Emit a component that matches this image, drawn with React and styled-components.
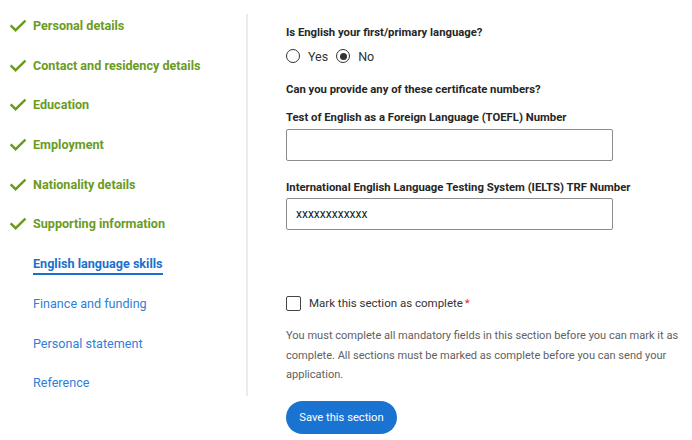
import React, { useState } from 'react'
import styled, { createGlobalStyle } from 'styled-components'

const GlobalStyle = createGlobalStyle`
  body {
    margin: 0;
    background: #fff;
    font-family: Roboto, "Liberation Sans", Arial, sans-serif;
  }
`;

const sections = [
    { name: 'Personal details', done: true },
    { name: 'Contact and residency details', done: true },
    { name: 'Education', done: true },
    { name: 'Employment', done: true },
    { name: 'Nationality details', done: true },
    { name: 'Supporting information', done: true },
    { name: 'English language skills', active: true },
    { name: 'Finance and funding' },
    { name: 'Personal statement' },
    { name: 'Reference' },
]

function Check() {
    return (
        <svg width="16" height="12" viewBox="0 0 16 12" fill="none">
            <path d="M1.5 6.2 L5.6 10.2 L14.6 1.4" stroke="#6b9b1f" strokeWidth="2.4" strokeLinecap="square" />
        </svg>
    )
}

function App() {
    const [first, setFirst] = useState('no')
    const [toefl, setToefl] = useState('')
    const [ielts, setIelts] = useState('xxxxxxxxxxxx')
    const [complete, setComplete] = useState(false)

    return (
        <Page>
            <GlobalStyle />
            <Nav>
                {sections.map(s => (
                    <NavItem key={s.name}>
                        <CheckSlot>{s.done && <Check />}</CheckSlot>
                        <NavLink done={s.done} active={s.active}>{s.name}</NavLink>
                    </NavItem>
                ))}
            </Nav>

            <Content>
                <Question>Is English your first/primary language?</Question>
                <RadioRow>
                    <RadioLabel onClick={() => setFirst('yes')}>
                        <RadioDot checked={first === 'yes'} />Yes
                    </RadioLabel>
                    <RadioLabel onClick={() => setFirst('no')}>
                        <RadioDot checked={first === 'no'} />No
                    </RadioLabel>
                </RadioRow>

                <Question $top={18}>Can you provide any of these certificate numbers?</Question>

                <FieldLabel $top={12}>Test of English as a Foreign Language (TOEFL) Number</FieldLabel>
                <TextInput value={toefl} onChange={e => setToefl(e.target.value)} />

                <FieldLabel $top={19}>International English Language Testing System (IELTS) TRF Number</FieldLabel>
                <TextInput value={ielts} onChange={e => setIelts(e.target.value)} />

                <CompleteRow onClick={() => setComplete(!complete)}>
                    <Box checked={complete} />
                    <span>Mark this section as complete</span>
                    <Required>*</Required>
                </CompleteRow>

                <Hint>
                    You must complete all mandatory fields in this section before you can mark it as
                    complete. All sections must be marked as complete before you can send your
                    application.
                </Hint>

                <SaveButton>Save this section</SaveButton>
            </Content>
        </Page>
    )
}

const Page = styled.div`
    display: flex;
    align-items: flex-start;
    width: 692px;
    height: 440px;
    overflow: hidden;
`;

const Nav = styled.nav`
    flex: 0 0 246px;
    height: 382px;
    margin-top: 14px;
    border-right: 2px solid #ececec;
    display: flex;
    flex-direction: column;
    gap: 15.7px;
`;

const NavItem = styled.div`
    height: 24px;
    display: flex;
    align-items: center;
    padding-left: 10px;
`;

const CheckSlot = styled.span`
    width: 23px;
    display: flex;
    align-items: center;
    svg { display: block; }
`;

const NavLink = styled.a`
    font-size: 12.6px;
    line-height: 16px;
    font-weight: ${p => (p.done || p.active ? 700 : 400)};
    color: ${p => (p.done ? '#6b9b1f' : p.active ? '#1b6fcd' : '#2f80d8')};
    border-bottom: ${p => (p.active ? '2px solid #1b6fcd' : 'none')};
    padding-bottom: ${p => (p.active ? '1px' : '0')};
    margin-top: ${p => (p.active ? '3px' : '0')};
    cursor: pointer;
`;

const Content = styled.main`
    flex: 1;
    padding: 25px 4px 0 38px;
    display: flex;
    flex-direction: column;
    align-items: flex-start;
    color: #262626;
`;

const Question = styled.div`
    font-size: 11.3px;
    line-height: 16px;
    font-weight: 700;
    margin-top: ${p => p.$top || 0}px;
`;

const FieldLabel = styled(Question)``;

const RadioRow = styled.div`
    display: flex;
    gap: 8px;
    margin-top: 7px;
    height: 16px;
    align-items: center;
`;

const RadioLabel = styled.label`
    display: flex;
    align-items: center;
    gap: 8px;
    font-size: 12.5px;
    color: #333;
    cursor: pointer;
`;

const RadioDot = styled.span`
    width: 14px;
    height: 14px;
    box-sizing: border-box;
    border-radius: 50%;
    border: 1.5px solid #333;
    display: inline-flex;
    align-items: center;
    justify-content: center;
    &::after {
        content: '';
        width: 7px;
        height: 7px;
        border-radius: 50%;
        background: #333;
        display: ${p => (p.checked ? 'block' : 'none')};
    }
`;

const TextInput = styled.input`
    margin-top: 2.5px;
    width: 327px;
    height: 32px;
    box-sizing: border-box;
    border: 1px solid #8c8c8c;
    border-radius: 2px;
    padding: 0 9px;
    font-family: inherit;
    font-size: 12px;
    color: #222;
    outline: none;
`;

const CompleteRow = styled.label`
    margin-top: 65px;
    display: flex;
    align-items: center;
    height: 16px;
    font-size: 11.5px;
    color: #333;
    cursor: pointer;
`;

const Box = styled.span`
    width: 15px;
    height: 15px;
    box-sizing: border-box;
    border: 1.5px solid #444;
    border-radius: 2px;
    margin-right: 8px;
    background: ${p => (p.checked ? '#444' : '#fff')};
`;

const Required = styled.span`
    color: #e02b2b;
    margin-left: 2px;
`;

const Hint = styled.p`
    margin: 15px 0 0;
    font-size: 11.05px;
    line-height: 19.5px;
    color: #616161;
`;

const SaveButton = styled.button`
    margin-top: 16px;
    height: 33px;
    width: 111px;
    border: none;
    border-radius: 17px;
    background: #1b73d1;
    color: #fff;
    font-family: inherit;
    font-size: 11.2px;
    cursor: pointer;
`;

export default App
